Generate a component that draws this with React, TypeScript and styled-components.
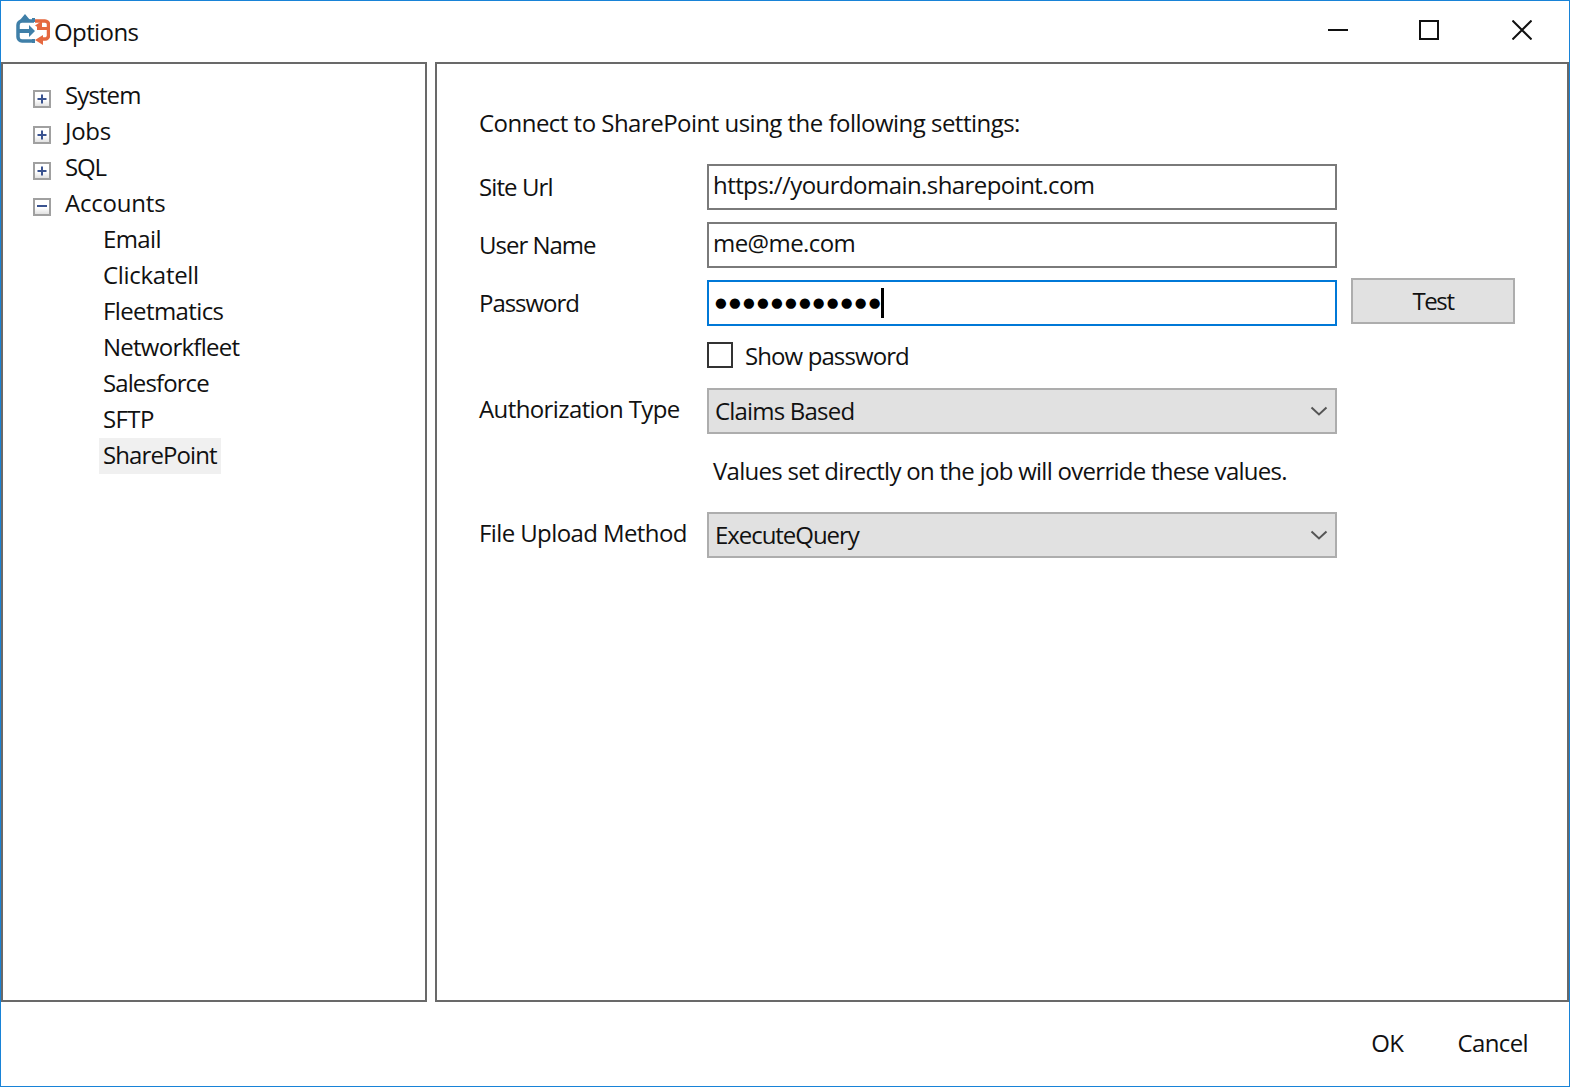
import React from "react";
import styled, { createGlobalStyle } from "styled-components";

const Global = createGlobalStyle`
  html, body { margin: 0; padding: 0; background: #fff; }
  body { font-family: "Open Sans", "Noto Sans", "Liberation Sans", sans-serif; color: #111; }
  * { box-sizing: border-box; }
`;

const Win = styled.div`
  width: 1570px; height: 1087px; border: 1px solid #1883d7;
  display: flex; flex-direction: column; background: #fff; overflow: hidden;
`;
const TitleBar = styled.div`
  height: 61px; flex: none; display: flex; align-items: center; padding: 0 1px 0 15px;
`;
const LogoBox = styled.svg`
  width: 34px; height: 32px; flex: none; margin-bottom: 3px; filter: blur(0.35px);
`;
const TitleText = styled.div`
  font-size: 24px; margin-left: 4px; flex: 1; letter-spacing: -0.6px;
`;
const WinBtn = styled.div<{ $pr?: number }>`
  width: 92px; height: 60px; display: flex; align-items: center; justify-content: center; color: #111;
  padding-bottom: 3px; padding-right: ${(p) => p.$pr ?? 0}px;
`;
const Body = styled.div`
  flex: 1; display: flex; gap: 8px; min-height: 0;
`;
const Panel = styled.div<{ $w?: number }>`
  border: 2px solid #696969;
  ${(p) => (p.$w ? `width:${p.$w}px; flex:none;` : "flex:1;")}
`;
const TreePanel = styled(Panel)`
  padding: 12px 0 0 30px;
`;
const Row = styled.div<{ $child?: boolean; $ls?: number }>`
  height: 36px; display: flex; align-items: center; font-size: 24px; letter-spacing: ${(p) => p.$ls ?? -0.6}px;
  padding-left: ${(p) => (p.$child ? "70px" : "0")};
`;
const Expander = styled.span`
  width: 18px; height: 18px; border: 2px solid #a0a0a0; margin-right: 14px; margin-top: 10px;
  display: flex; align-items: center; justify-content: center; flex: none;
  background: linear-gradient(#fff 55%, #e2e2e2);
`;
const Selected = styled.span`
  background: #f0f0f0; padding: 0 4px 4px; margin: 4px 0 0 -4px; height: 36px; display: flex; align-items: center;
`;
const FormPanel = styled(Panel)`
  padding: 41px 0 0 42px;
`;
const Heading = styled.div`
  font-size: 24px; height: 36px; line-height: 36px; letter-spacing: -0.52px; margin-bottom: 23px;
`;
const FormRow = styled.div<{ $mt?: number }>`
  display: flex; align-items: flex-start; margin-top: ${(p) => p.$mt ?? 0}px;
`;
const Label = styled.div<{ $ls?: number; $sel?: boolean }>`
  width: 228px; flex: none; font-size: 24px; letter-spacing: ${(p) => p.$ls ?? -0.6}px; height: 46px;
  line-height: ${(p) => (p.$sel ? 42 : 46)}px;
`;
const Input = styled.div<{ $focus?: boolean }>`
  width: 630px; height: 46px; flex: none; border: 2px solid ${(p) => (p.$focus ? "#0078d7" : "#7a7a7a")};
  font-size: 24px; letter-spacing: -0.57px; display: flex; align-items: center; padding-left: 4px; padding-bottom: 5px;
`;
const Dots = styled.span`
  font-family: "DejaVu Sans", sans-serif; font-size: 13.5px; letter-spacing: 2.2px; line-height: 1; color: #000;
  margin: 5px 0 0 2px; white-space: nowrap;
`;
const Caret = styled.span`
  width: 3px; height: 30px; background: #000; margin: 5px 0 0 -2px; flex: none;
`;
const TestBtn = styled.div`
  width: 164px; height: 46px; margin-left: 14px; margin-top: -2px; background: #e1e1e1; border: 2px solid #adadad;
  font-size: 24px; letter-spacing: -1.4px; display: flex; align-items: center; justify-content: center; padding-bottom: 2px;
`;
const CheckRow = styled.div`
  display: flex; align-items: center; margin: 14px 0 0 228px; height: 30px; font-size: 24px; letter-spacing: -0.9px;
`;
const Check = styled.span`
  width: 26px; height: 26px; border: 2px solid #333; margin-right: 12px; flex: none;
`;
const Select = styled.div<{ $ls?: number }>`
  width: 630px; height: 46px; flex: none; background: #e1e1e1; border: 2px solid #adadad;
  font-size: 24px; letter-spacing: ${(p) => p.$ls ?? -0.6}px; display: flex; align-items: center; justify-content: space-between;
  padding: 0 7px 2px 6px;
`;
const ChevronSvg = styled.svg`
  width: 18px; height: 12px; flex: none; margin-top: 2px;
`;
const Note = styled.div`
  margin: 19px 0 0 234px; font-size: 24px; height: 36px; line-height: 36px; letter-spacing: -0.72px;
`;
const Footer = styled.div`
  height: 84px; flex: none; display: flex; justify-content: flex-end; align-items: center; font-size: 24px;
  letter-spacing: -0.6px; padding: 0 41px 4px 0; gap: 54px;
`;

const Plus = () => (
  <svg width="14" height="14" viewBox="0 0 14 14"><path d="M7 2.5v9M2.5 7h9" stroke="#3a5390" strokeWidth="2" /></svg>
);
const Minus = () => (
  <svg width="14" height="14" viewBox="0 0 14 14"><path d="M2 6h10" stroke="#3a5390" strokeWidth="2" /></svg>
);
const Chevron = () => (
  <ChevronSvg viewBox="0 0 18 12"><path d="M1.5 2.5 9 9.5l7.5-7" fill="none" stroke="#555" strokeWidth="2" /></ChevronSvg>
);
const Logo = () => (
  <LogoBox viewBox="0 0 34 32">
    <g fill="none" stroke="#3f7fa8">
      <path d="M18 7H6a4 4 0 0 0-4 4v12a4 4 0 0 0 4 4h12" strokeWidth="3.5" />
      <path d="M2 17h12" strokeWidth="4" />
    </g>
    <path d="M4 6l5-6 5 6zM13 11l6 6-6 6z" fill="#3f7fa8" />
    <path d="M16 4h3v4h-3zM16 25h3v4h-3z" fill="#3f7fa8" />
    <g fill="none" stroke="#e5683f">
      <path d="M19 7h10a3.500 3.500 0 0 1 3.500 3.500v11a3.500 3.500 0 0 1-3.500 3.500h-5" strokeWidth="3.500" />
      <path d="M21 14.500h10" strokeWidth="3" />
    </g>
    <path d="M26 7l-7 4.500 7 4.500zM27 21l-8 5 8 5z" fill="#e5683f" />
  </LogoBox>
);

const tops: [string, number][] = [["System", -0.9], ["Jobs", -0.3], ["SQL", -1.2]];
const children: [string, number][] = [
  ["Email", -0.6], ["Clickatell", -0.3], ["Fleetmatics", -0.6], ["Networkfleet", -0.75], ["Salesforce", -0.9], ["SFTP", -0.6],
];

export default function App() {
  return (
    <Win>
      <Global />
      <TitleBar>
        <Logo />
        <TitleText>Options</TitleText>
        <WinBtn>
          <svg width="20" height="20" viewBox="0 0 20 20"><path d="M0 10h20" stroke="#111" strokeWidth="2" /></svg>
        </WinBtn>
        <WinBtn $pr={2}>
          <svg width="20" height="20" viewBox="0 0 20 20"><rect x="1" y="1" width="18" height="18" fill="none" stroke="#111" strokeWidth="2" /></svg>
        </WinBtn>
        <WinBtn>
          <svg width="20" height="20" viewBox="0 0 20 20"><path d="M0.5 0.5l19 19M19.5 0.5l-19 19" stroke="#111" strokeWidth="2" /></svg>
        </WinBtn>
      </TitleBar>
      <Body>
        <TreePanel $w={426}>
          {tops.map(([t, ls]) => (
            <Row $ls={ls} key={t}><Expander><Plus /></Expander>{t}</Row>
          ))}
          <Row $ls={-0.2}><Expander><Minus /></Expander>Accounts</Row>
          {children.map(([t, ls]) => (<Row $child $ls={ls} key={t}>{t}</Row>))}
          <Row $child $ls={-0.9}><Selected>SharePoint</Selected></Row>
        </TreePanel>
        <FormPanel>
          <Heading>Connect to SharePoint using the following settings:</Heading>
          <FormRow><Label $ls={-0.9}>Site Url</Label><Input>https://yourdomain.sharepoint.com</Input></FormRow>
          <FormRow $mt={12}><Label $ls={-1}>User Name</Label><Input>me@me.com</Input></FormRow>
          <FormRow $mt={12}>
            <Label $ls={-1.05}>Password</Label>
            <Input $focus><Dots>●●●●●●●●●●●●</Dots><Caret /></Input>
            <TestBtn>Test</TestBtn>
          </FormRow>
          <CheckRow><Check />Show password</CheckRow>
          <FormRow $mt={18}><Label $sel>Authorization Type</Label><Select $ls={-0.8}>Claims Based<Chevron /></Select></FormRow>
          <Note>Values set directly on the job will override these values.</Note>
          <FormRow $mt={23}><Label $sel>File Upload Method</Label><Select $ls={-1.05}>ExecuteQuery<Chevron /></Select></FormRow>
        </FormPanel>
      </Body>
      <Footer><span>OK</span><span>Cancel</span></Footer>
    </Win>
  );
}
